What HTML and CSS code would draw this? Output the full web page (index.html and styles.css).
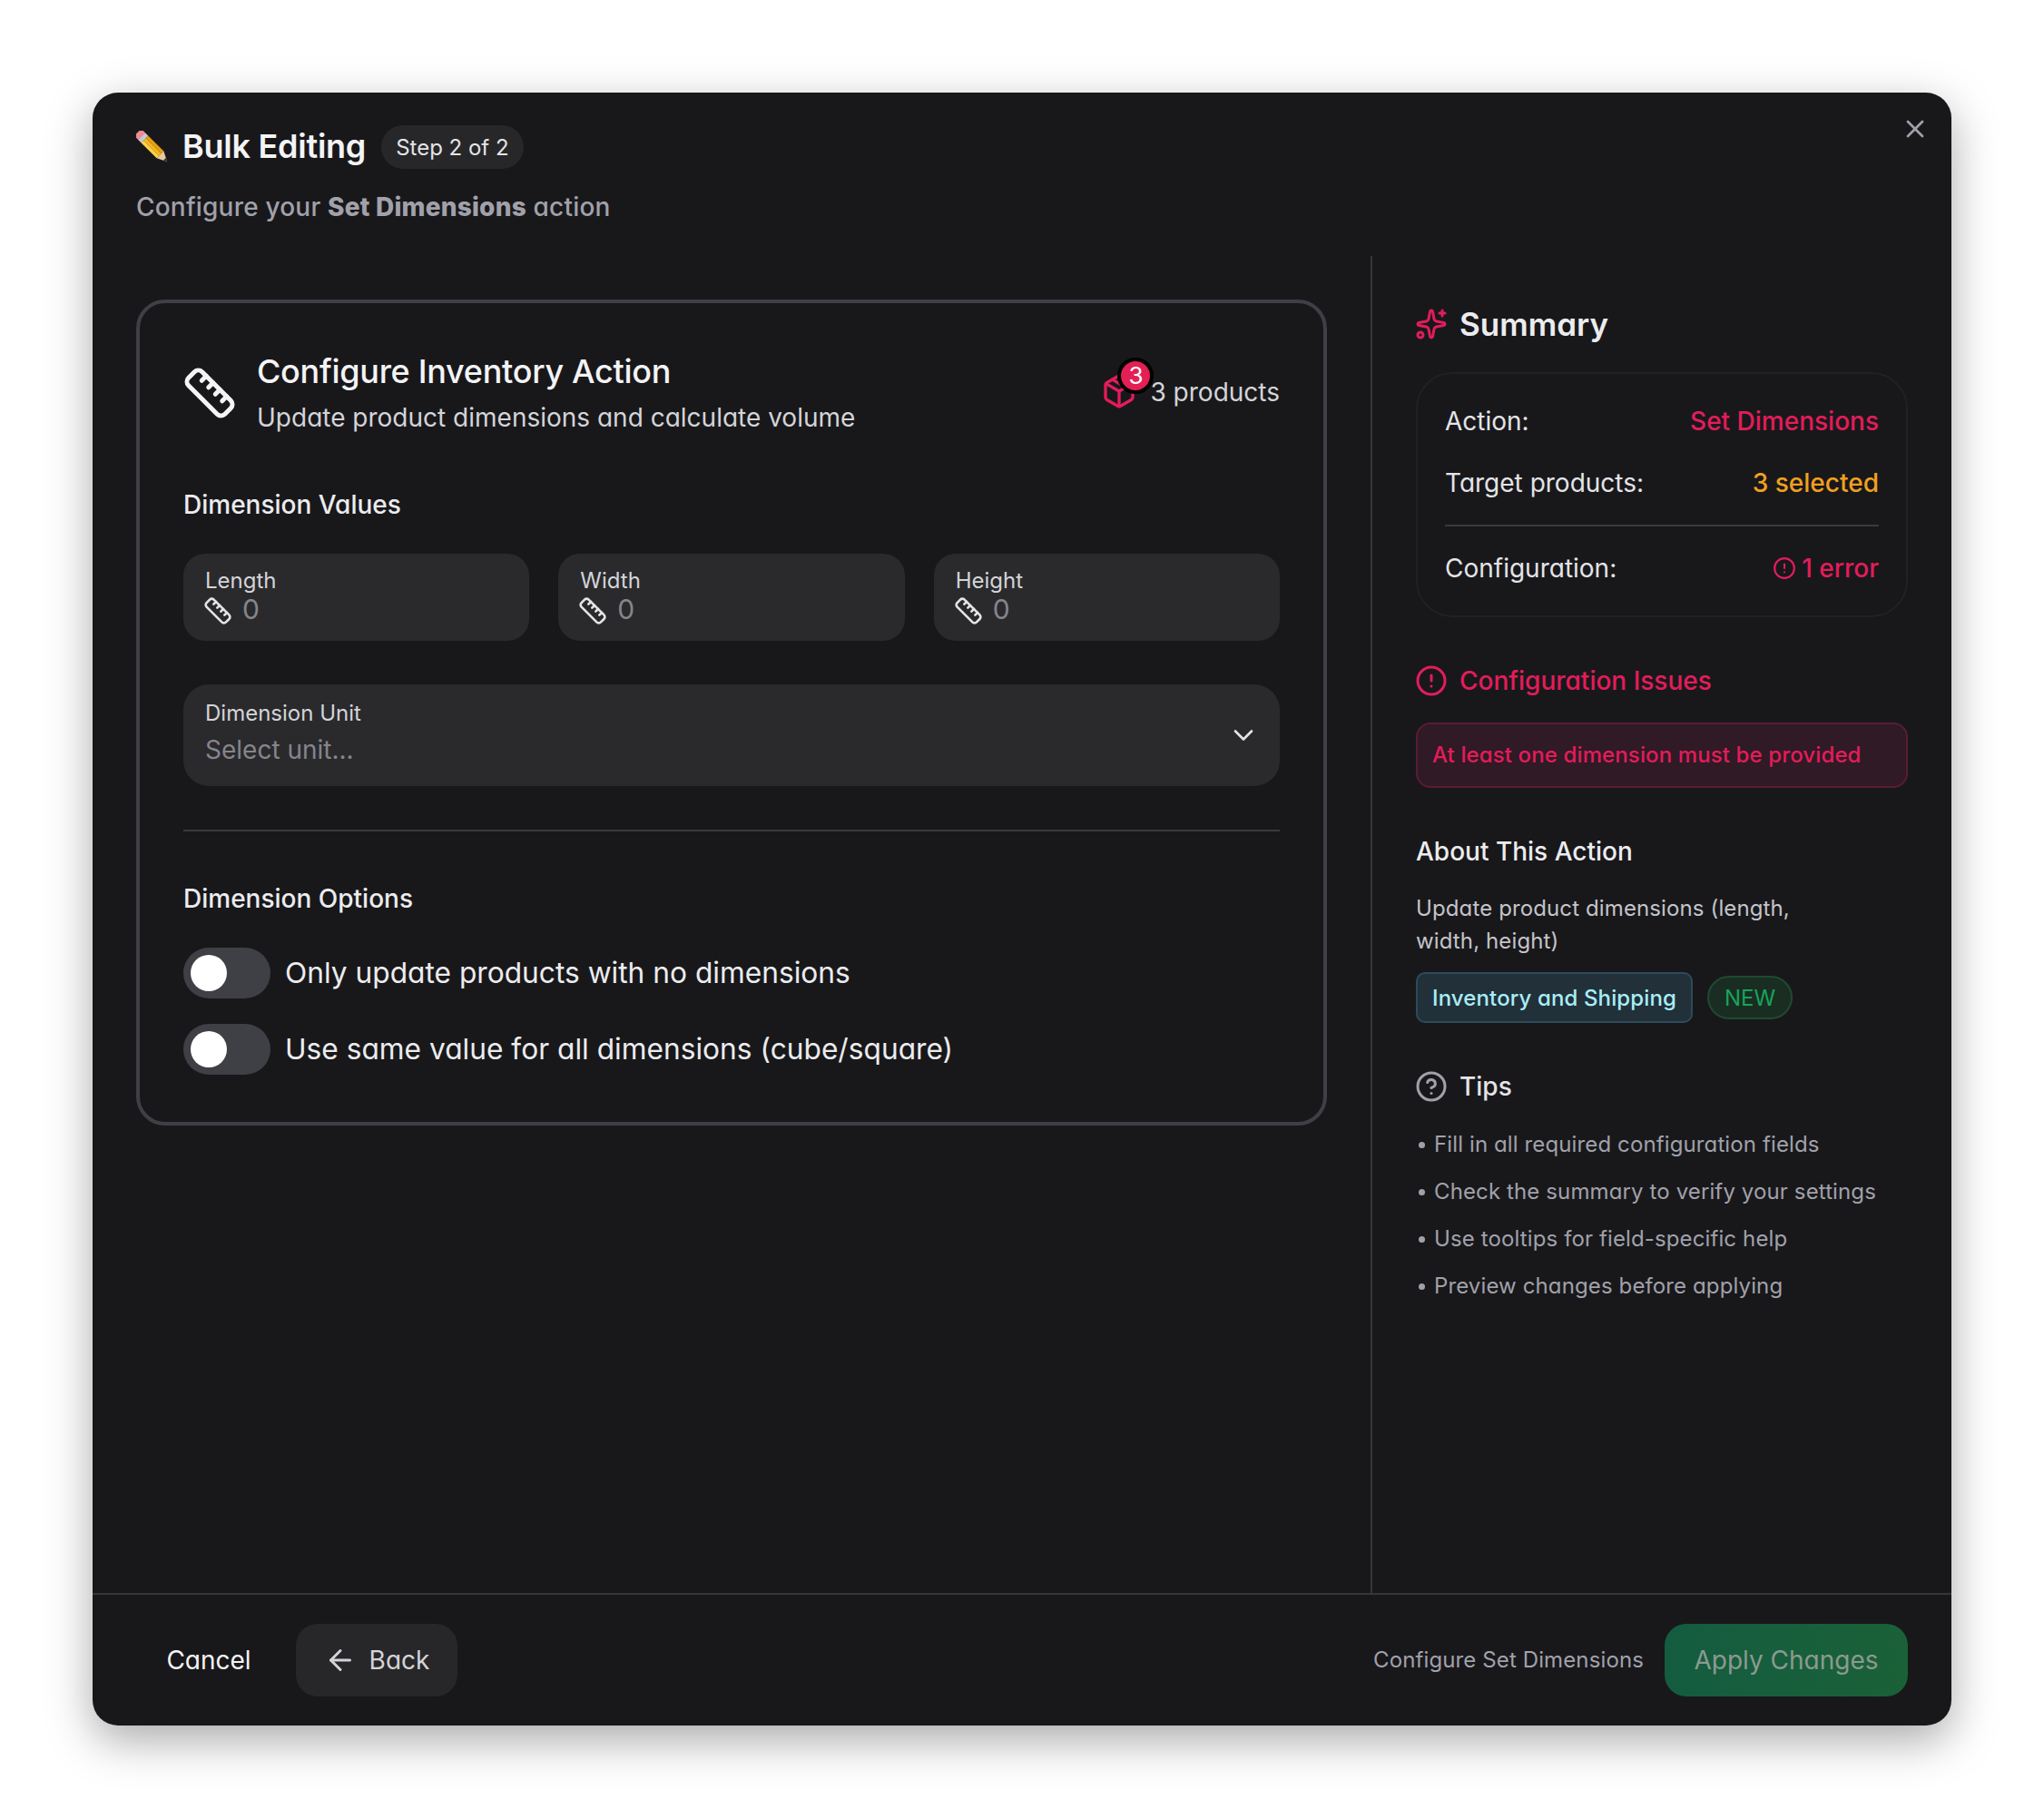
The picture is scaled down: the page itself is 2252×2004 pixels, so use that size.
FILE: index.html
```html
<!DOCTYPE html>
<html lang="en">
<head>
<meta charset="utf-8">
<title>Bulk Editing</title>
<link rel="stylesheet" href="styles.css">
</head>
<body>
<svg class="sprite" width="0" height="0" aria-hidden="true">
  <symbol id="ruler" viewBox="0 0 24 24"><path d="M21.3 15.3a2.4 2.4 0 0 1 0 3.4l-2.6 2.6a2.4 2.4 0 0 1-3.4 0L2.7 8.7a2.41 2.41 0 0 1 0-3.4l2.6-2.6a2.41 2.41 0 0 1 3.4 0Z"/><path d="m14.5 12.5 2-2"/><path d="m11.5 9.5 2-2"/><path d="m8.5 6.5 2-2"/><path d="m17.5 15.5 2-2"/></symbol>
  <symbol id="alert" viewBox="0 0 24 24"><circle cx="12" cy="12" r="10"/><line x1="12" x2="12" y1="8" y2="12"/><line x1="12" x2="12.01" y1="16" y2="16"/></symbol>
</svg>
<main class="modal">
  <header class="modal-head">
    <div class="title-row">
      <svg class="pencil" viewBox="0 0 36 36" aria-hidden="true">
        <g transform="rotate(-45 18 18)">
          <rect x="12.5" y="-5" width="11" height="8" rx="2.5" fill="#ee8a96"/>
          <rect x="12.5" y="1.500" width="11" height="4.500" fill="#c4c8ce"/>
          <rect x="12.5" y="6" width="3.700" height="24" fill="#fcd34d"/>
          <rect x="16.200" y="6" width="3.700" height="24" fill="#f5b81f"/>
          <rect x="19.900" y="6" width="3.600" height="24" fill="#e89f10"/>
          <polygon points="12.500,30 23.500,30 18,41" fill="#e6c9a0"/>
          <polygon points="16,37 20,37 18,41" fill="#2a2a2a"/>
        </g>
      </svg>
      <h1 class="title">Bulk Editing</h1>
      <span class="step-chip">Step 2 of 2</span>
    </div>
    <p class="subtitle">Configure your <strong>Set Dimensions</strong> action</p>
    <button class="close" type="button" aria-label="Close">
      <svg viewBox="0 0 24 24" class="line-icon"><path d="M18 6 6 18"/><path d="m6 6 12 12"/></svg>
    </button>
  </header>

  <div class="modal-body">
    <section class="main-col">
      <div class="card">
        <div class="card-head">
          <svg class="line-icon head-ruler"><use href="#ruler"/></svg>
          <div class="card-titles">
            <h2 class="card-title">Configure Inventory Action</h2>
            <p class="card-sub">Update product dimensions and calculate volume</p>
          </div>
          <div class="products">
            <span class="box-wrap">
              <svg class="line-icon box-icon" viewBox="0 0 24 24"><path d="M11 21.730a2 2 0 0 0 2 0l7-4A2 2 0 0 0 21 16V8a2 2 0 0 0-1-1.730l-7-4a2 2 0 0 0-2 0l-7 4A2 2 0 0 0 3 8v8a2 2 0 0 0 1 1.730z"/><path d="M12 22V12"/><path d="m3.300 7 8.700 5 8.700-5"/><path d="m7.500 4.270 9 5.150"/></svg>
              <span class="count-badge">3</span>
            </span>
            <span class="products-label">3 products</span>
          </div>
        </div>

        <h3 class="section-title values-title">Dimension Values</h3>
        <div class="dim-grid">
          <div class="field">
            <span class="field-label">Length</span>
            <span class="field-value"><svg class="line-icon field-ruler"><use href="#ruler"/></svg>0</span>
          </div>
          <div class="field">
            <span class="field-label">Width</span>
            <span class="field-value"><svg class="line-icon field-ruler"><use href="#ruler"/></svg>0</span>
          </div>
          <div class="field">
            <span class="field-label">Height</span>
            <span class="field-value"><svg class="line-icon field-ruler"><use href="#ruler"/></svg>0</span>
          </div>
        </div>

        <div class="select">
          <div class="select-text">
            <span class="field-label">Dimension Unit</span>
            <span class="select-value">Select unit...</span>
          </div>
          <svg class="line-icon chevron" viewBox="0 0 24 24"><path d="m6 9 6 6 6-6"/></svg>
        </div>

        <hr class="rule">

        <h3 class="section-title options-title">Dimension Options</h3>
        <div class="options">
          <div class="option"><span class="toggle"><span class="thumb"></span></span><span class="option-label">Only update products with no dimensions</span></div>
          <div class="option"><span class="toggle"><span class="thumb"></span></span><span class="option-label">Use same value for all dimensions (cube/square)</span></div>
        </div>
      </div>
    </section>

    <aside class="side-col">
      <div class="side-head summary-head">
        <svg class="line-icon side-icon rose" viewBox="0 0 24 24"><path d="M11.017 2.814a1 1 0 0 1 1.966 0l1.051 5.558a2 2 0 0 0 1.594 1.594l5.558 1.051a1 1 0 0 1 0 1.966l-5.558 1.051a2 2 0 0 0-1.594 1.594l-1.051 5.558a1 1 0 0 1-1.966 0l-1.051-5.558a2 2 0 0 0-1.594-1.594l-5.558-1.051a1 1 0 0 1 0-1.966l5.558-1.051a2 2 0 0 0 1.594-1.594z"/><path d="M20 2v4"/><path d="M22 4h-4"/><circle cx="4" cy="20" r="2"/></svg>
        <h2 class="summary-title">Summary</h2>
      </div>
      <div class="summary-card">
        <div class="sum-row"><span>Action:</span><span class="rose medium">Set Dimensions</span></div>
        <div class="sum-row"><span>Target products:</span><span class="amber medium">3 selected</span></div>
        <hr class="sum-rule">
        <div class="sum-row"><span>Configuration:</span><span class="rose medium err"><svg class="line-icon err-icon"><use href="#alert"/></svg>1 error</span></div>
      </div>

      <div class="side-head issues-head">
        <svg class="line-icon side-icon rose"><use href="#alert"/></svg>
        <h3 class="issues-title">Configuration Issues</h3>
      </div>
      <p class="error-box">At least one dimension must be provided</p>

      <h3 class="about-title">About This Action</h3>
      <p class="about-desc">Update product dimensions (length, width, height)</p>
      <div class="chips">
        <span class="chip-cat">Inventory and Shipping</span>
        <span class="chip-new">NEW</span>
      </div>

      <div class="side-head tips-head">
        <svg class="line-icon side-icon muted" viewBox="0 0 24 24"><circle cx="12" cy="12" r="10"/><path d="M9.090 9a3 3 0 0 1 5.830 1c0 2-3 3-3 3"/><path d="M12 17h.010"/></svg>
        <h3 class="tips-title">Tips</h3>
      </div>
      <ul class="tips">
        <li>Fill in all required configuration fields</li>
        <li>Check the summary to verify your settings</li>
        <li>Use tooltips for field-specific help</li>
        <li>Preview changes before applying</li>
      </ul>
    </aside>
  </div>

  <footer class="modal-foot">
    <div class="foot-group">
      <button class="btn btn-cancel" type="button">Cancel</button>
      <button class="btn btn-back" type="button"><svg class="line-icon back-arrow" viewBox="0 0 24 24"><path d="m12 19-7-7 7-7"/><path d="M19 12H5"/></svg>Back</button>
    </div>
    <div class="foot-group foot-right">
      <span class="foot-hint">Configure Set Dimensions</span>
      <button class="btn btn-apply" type="button">Apply Changes</button>
    </div>
  </footer>
</main>
</body>
</html>
```
FILE: styles.css
```css
* { box-sizing: border-box; }
html, body { margin: 0; padding: 0; }
body {
  width: 2252px;
  height: 2004px;
  padding: 102px;
  background: #fff;
  font-family: Inter, "Liberation Sans", sans-serif;
  font-feature-settings: "cv11" 1;
  color: #ececee;
  overflow: hidden;
}
h1, h2, h3, p, ul { margin: 0; padding: 0; }
button { font: inherit; font-feature-settings: inherit; border: 0; background: none; color: inherit; padding: 0; }
.sprite { position: absolute; }
.line-icon { fill: none; stroke: currentColor; stroke-width: 2; stroke-linecap: round; stroke-linejoin: round; flex: none; display: block; }

.modal {
  width: 2048px;
  height: 1799px;
  display: flex;
  flex-direction: column;
  position: relative;
  background: #18181b;
  border-radius: 28px;
  box-shadow: 0 16px 50px rgba(0, 0, 0, .34);
}

.modal-head { height: 180px; padding: 36px 48px 0; flex: none; }
.title-row { display: flex; align-items: center; height: 48px; }
.pencil { width: 36px; height: 36px; flex: none; }
.title { margin-left: 15px; margin-top: -2px; font-size: 36px; line-height: 48px; font-weight: 600; letter-spacing: -.25px; color: #f4f4f5; }
.step-chip {
  margin-left: 17px;
  height: 48px;
  padding: 0 16px;
  display: flex;
  align-items: center;
  border-radius: 24px;
  background: #27272a;
  font-size: 24px;
  color: #e4e4e7;
}
.subtitle { margin-top: 24px; font-size: 28px; line-height: 36px; font-weight: 500; letter-spacing: .2px; color: #a1a1aa; }
.subtitle strong { font-weight: 800; }
.close { position: absolute; top: 24px; right: 24px; width: 32px; height: 32px; color: #a1a1aa; }
.close svg { width: 32px; height: 32px; }

.modal-body { flex: 1; min-height: 0; display: flex; }
.main-col { width: 1408px; padding: 48px; flex: none; }
.side-col { width: 640px; flex: none; border-left: 2px solid #36363a; padding: 48px 48px 0; }

.card {
  border: 4px solid #3f3f46;
  border-radius: 32px;
  padding: 48px 48px 52px;
  background: #18181b;
}
.card-head { display: flex; align-items: center; }
.head-ruler { width: 60px; height: 60px; margin: 4px 22px 0 -1px; color: #f4f4f5; }
.card-titles { flex: 1; }
.card-title { font-size: 36px; line-height: 54px; font-weight: 500; letter-spacing: -.28px; color: #f4f4f5; }
.card-sub { margin-top: 4px; font-size: 28px; line-height: 40px; color: #d4d4d8; }
.products { display: flex; align-items: center; gap: 14px; }
.box-wrap { position: relative; width: 40px; height: 40px; display: block; color: #e31c5a; }
.box-icon { width: 40px; height: 40px; }
.count-badge {
  position: absolute;
  left: 18px;
  top: -17px;
  width: 40px;
  height: 40px;
  border: 4px solid #000;
  border-radius: 50%;
  background: #e41f56;
  color: #fff;
  font-size: 26px;
  line-height: 32px;
  text-align: center;
}
.products-label { margin-top: 2px; font-size: 28px; line-height: 40px; color: #d4d4d8; }

.section-title { font-size: 28px; line-height: 40px; font-weight: 500; color: #ececee; }
.values-title { margin-top: 56px; }
.options-title { margin-top: 54px; }

.dim-grid { margin-top: 34px; display: grid; grid-template-columns: repeat(3, 1fr); gap: 32px; }
.field { height: 96px; padding: 14px 24px 0; border-radius: 24px; background: #2a2a2d; }
.field-label { display: block; font-size: 24px; line-height: 32px; color: #d4d4d8; }
.field-value { display: flex; align-items: center; gap: 11px; height: 30px; font-size: 30px; color: #85858b; }
.field-ruler { width: 32px; height: 32px; margin-left: -2px; margin-top: 4px; color: #e4e4e7; }

.select {
  margin-top: 48px;
  height: 112px;
  padding: 0 24px;
  display: flex;
  align-items: center;
  justify-content: space-between;
  border-radius: 28px;
  background: #2a2a2d;
}
.select-value { display: block; margin-top: 4px; margin-bottom: 4px; font-size: 28px; line-height: 40px; color: #85858b; }
.chevron { width: 36px; height: 36px; margin-right: -2px; stroke-width: 1.75; color: #e4e4e7; }

.rule { margin: 48px 0 0; height: 2px; border: 0; background: #3a3a3e; }

.options { margin-top: 34px; display: flex; flex-direction: column; gap: 28px; }
.option { display: flex; align-items: center; gap: 16px; }
.toggle { width: 96px; height: 56px; padding: 8px; border-radius: 28px; background: #3f3f46; display: block; flex: none; }
.thumb { display: block; width: 40px; height: 40px; border-radius: 50%; background: #fff; }
.option-label { font-size: 31.7px; line-height: 44px; color: #ececee; }

.side-head { display: flex; align-items: center; gap: 13px; }
.side-icon { width: 36px; height: 36px; margin-left: -1px; }
.rose { color: #e31c5a; }
.amber { color: #f0a020; }
.muted { color: #a1a1aa; }
.medium { font-weight: 500; }
.summary-title { font-size: 35px; line-height: 54px; font-weight: 600; color: #ececee; }
.summary-card {
  margin-top: 26px;
  height: 270px;
  padding: 32px 30px 0;
  border: 2px solid #212124;
  border-radius: 40px;
  background: #18181b;
}
.sum-row { display: flex; justify-content: space-between; align-items: center; font-size: 28px; line-height: 40px; color: #e4e4e7; }
.sum-row + .sum-row { margin-top: 28px; }
.sum-rule { margin: 26px 0; height: 2px; border: 0; background: #3a3a3e; }
.err { display: flex; align-items: center; gap: 6px; }
.err-icon { width: 26px; height: 26px; }

.issues-head { margin-top: 49px; }
.issues-title { font-size: 28px; line-height: 42px; font-weight: 500; color: #e31c5a; }
.error-box {
  margin-top: 25px;
  height: 72px;
  padding: 0 16px 2px;
  display: flex;
  align-items: center;
  border: 2px solid #5a1c35;
  border-radius: 16px;
  background: #2f1a25;
  font-size: 24px;
  letter-spacing: .12px;
  font-weight: 500;
  color: #e31c5a;
}
.about-title { margin-top: 50px; font-size: 28px; line-height: 40px; font-weight: 500; color: #ececee; }
.about-desc { margin-top: 25px; max-width: 450px; font-size: 24px; letter-spacing: .12px; line-height: 36px; color: #c4c4c9; }
.chips { margin-top: 16px; display: flex; align-items: center; gap: 16px; }
.chip-cat {
  height: 56px;
  padding: 0 16px;
  display: flex;
  align-items: center;
  border: 2px solid #2d4b5a;
  border-radius: 10px;
  background: #22303a;
  font-size: 24px;
  letter-spacing: .12px;
  font-weight: 500;
  color: #a8eef5;
}
.chip-new {
  height: 48px;
  padding: 0 17px;
  display: flex;
  align-items: center;
  border: 2px solid #1f4a30;
  border-radius: 24px;
  background: #1a2d22;
  font-size: 24px;
  color: #17a35a;
}
.tips-head { margin-top: 48px; }
.tips-title { font-size: 28px; line-height: 44px; font-weight: 500; color: #e4e4e7; }
.tips { margin-top: 24px; list-style: none; display: flex; flex-direction: column; gap: 16px; }
.tips li { position: relative; padding-left: 20px; font-size: 24px; letter-spacing: .12px; line-height: 36px; color: #a1a1aa; white-space: nowrap; }
.tips li::before { content: ""; position: absolute; left: 3px; top: 15px; width: 7px; height: 7px; border-radius: 50%; background: #a1a1aa; }

.modal-foot {
  flex: none;
  height: 146px;
  padding: 0 48px;
  border-top: 2px solid #36363a;
  display: flex;
  align-items: center;
  justify-content: space-between;
}
.foot-group { display: flex; align-items: center; gap: 16px; }
.foot-right { gap: 23px; }
.btn { height: 80px; display: flex; align-items: center; justify-content: center; font-size: 28px; border-radius: 24px; }
.btn-cancel { width: 160px; color: #f4f4f5; }
.btn-back { width: 178px; gap: 14px; background: #27272a; color: #d4d4d8; }
.back-arrow { width: 36px; height: 36px; }
.foot-hint { margin-top: -2px; font-size: 24px; letter-spacing: .12px; color: #a1a1aa; }
.btn-apply { width: 268px; background: linear-gradient(90deg, #145c40, #1a6138); color: #8b9a90; }
```
